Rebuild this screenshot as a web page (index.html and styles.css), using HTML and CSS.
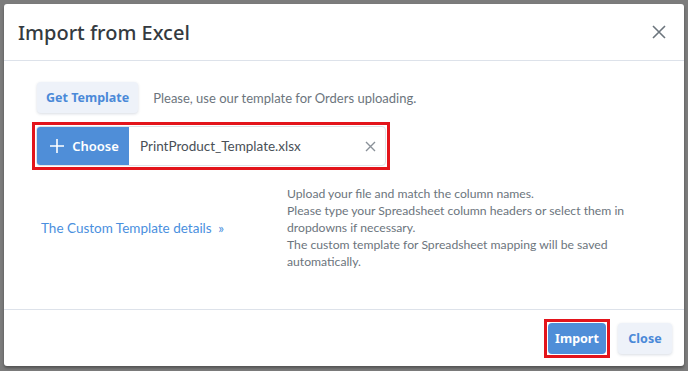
FILE: index.html
```html
<!DOCTYPE html>
<html lang="en">
<head>
    <meta charset="UTF-8">
    <meta name="viewport" content="width=device-width, initial-scale=1.0">
    <title>Import from Excel</title>
    <link rel="stylesheet" href="styles.css">
</head>
<body>
    <div class="modal">
        <div class="modal-header">
            <h1>Import from Excel</h1>
            <button class="btn-dismiss" type="button" aria-label="Close">
                <svg width="14" height="14" viewBox="0 0 14 14"><path d="M1 1L13 13M13 1L1 13" stroke="#6c757d" stroke-width="1.6" fill="none"/></svg>
            </button>
        </div>

        <div class="modal-body">
            <div class="template-row">
                <button class="btn btn-light" type="button">Get Template</button>
                <span class="hint">Please, use our template for Orders uploading.</span>
            </div>

            <div class="mark mark-file">
                <div class="file-group">
                    <button class="btn-choose" type="button">
                        <svg width="16" height="16" viewBox="0 0 16 16"><path d="M8 1V15M1 8H15" stroke="#fff" stroke-width="1.6" fill="none"/></svg>
                        Choose
                    </button>
                    <span class="file-name">PrintProduct_Template.xlsx</span>
                    <button class="btn-clear" type="button" aria-label="Remove">
                        <svg width="11" height="11" viewBox="0 0 11 11"><path d="M1 1L10 10M10 1L1 10" stroke="#8a9199" stroke-width="1.4" fill="none"/></svg>
                    </button>
                </div>
            </div>

            <div class="details">
                <a class="details-link" href="#">The Custom Template details <span class="chev">&raquo;</span></a>
                <div class="details-text">
                    Upload your file and match the column names.<br>
                    Please type your Spreadsheet column headers or select them in dropdowns if necessary.<br>
                    The custom template for Spreadsheet mapping will be saved automatically.
                </div>
            </div>
        </div>

        <div class="modal-footer">
            <div class="mark">
                <button class="btn btn-primary" type="button">Import</button>
            </div>
            <button class="btn btn-light" type="button">Close</button>
        </div>
    </div>
</body>
</html>
```

FILE: styles.css
```css
body {
    margin: 0;
    background: #7c7c7c;
    font-family: 'Noto Sans', 'Open Sans', sans-serif;
    height: 371px;
    overflow: hidden;
}
.modal {
    margin: 4px 0 0 4px;
    width: 680px;
    height: 362px;
    background: #fff;
    border-radius: 3px;
    box-shadow: 0 2px 3px rgba(0, 0, 0, 0.35);
    display: flex;
    flex-direction: column;
}
.modal-header {
    height: 56px;
    padding: 0 18px 0 14px;
    display: flex;
    align-items: center;
    justify-content: space-between;
    border-bottom: 1px solid #dde2ea;
}
h1 {
    margin: 0;
    font-size: 20px;
    font-weight: 500;
    color: #343a40;
}
.btn-dismiss {
    border: none;
    background: none;
    padding: 0;
    display: flex;
}
.modal-body {
    flex: 1;
    padding: 21px 20px 0 33px;
}
.template-row {
    display: flex;
    align-items: center;
    gap: 15px;
}
.btn {
    font-family: 'Noto Sans', sans-serif;
    font-size: 12.5px;
    font-weight: 700;
    height: 31px;
    padding: 0 9px;
    border: none;
    border-radius: 4px;
    cursor: pointer;
}
.btn-light {
    background: #eef2f9;
    color: #4a89d8;
    box-shadow: 0 1px 3px rgba(40, 60, 100, 0.18);
}
.btn-primary {
    background: #4f8ed8;
    color: #fff;
}
.hint {
    font-family: 'Lato', sans-serif;
    font-size: 13px;
    color: #6c757d;
}
/* red annotation frame */
.mark {
    border: 3px solid #e3141b;
    padding: 1px;
    display: inline-flex;
}
.mark-file {
    margin: 9px 0 0 -5px;
}
.file-group {
    width: 350px;
    height: 40px;
    display: flex;
    align-items: center;
    border: 1px solid #dfe3e8;
    border-radius: 4px;
    box-sizing: border-box;
    overflow: hidden;
}
.btn-choose {
    height: 100%;
    width: 92px;
    flex: none;
    display: flex;
    align-items: center;
    justify-content: center;
    gap: 7px;
    background: #4f8ed8;
    color: #fff;
    border: none;
    font-family: 'Noto Sans', sans-serif;
    font-size: 13px;
    font-weight: 600;
    padding: 0 0 0 2px;
}
.file-name {
    flex: 1;
    padding-left: 11px;
    font-family: 'Lato', sans-serif;
    font-size: 13.5px;
    color: #495057;
}
.btn-clear {
    border: none;
    background: none;
    padding: 0 9px 0 0;
    display: flex;
}
.details {
    margin-top: 15px;
    display: grid;
    grid-template-columns: 250px 1fr;
    align-items: center;
}
.details-link {
    margin-left: 4px;
    font-family: 'Lato', sans-serif;
    color: #4a8fde;
    font-size: 13.5px;
    text-decoration: none;
}
.chev {
    margin-left: 3px;
}
.details-text {
    font-family: 'Lato', sans-serif;
    font-size: 12.2px;
    line-height: 17px;
    color: #6c757d;
}
.modal-footer {
    height: 56px;
    border-top: 1px solid #dde2ea;
    display: flex;
    align-items: center;
    justify-content: flex-end;
    gap: 8px;
    padding-right: 12px;
}
.modal-footer .btn-primary {
    width: 58px;
    padding: 0;
}
.modal-footer .btn-light {
    width: 54px;
    padding: 0;
}
```
